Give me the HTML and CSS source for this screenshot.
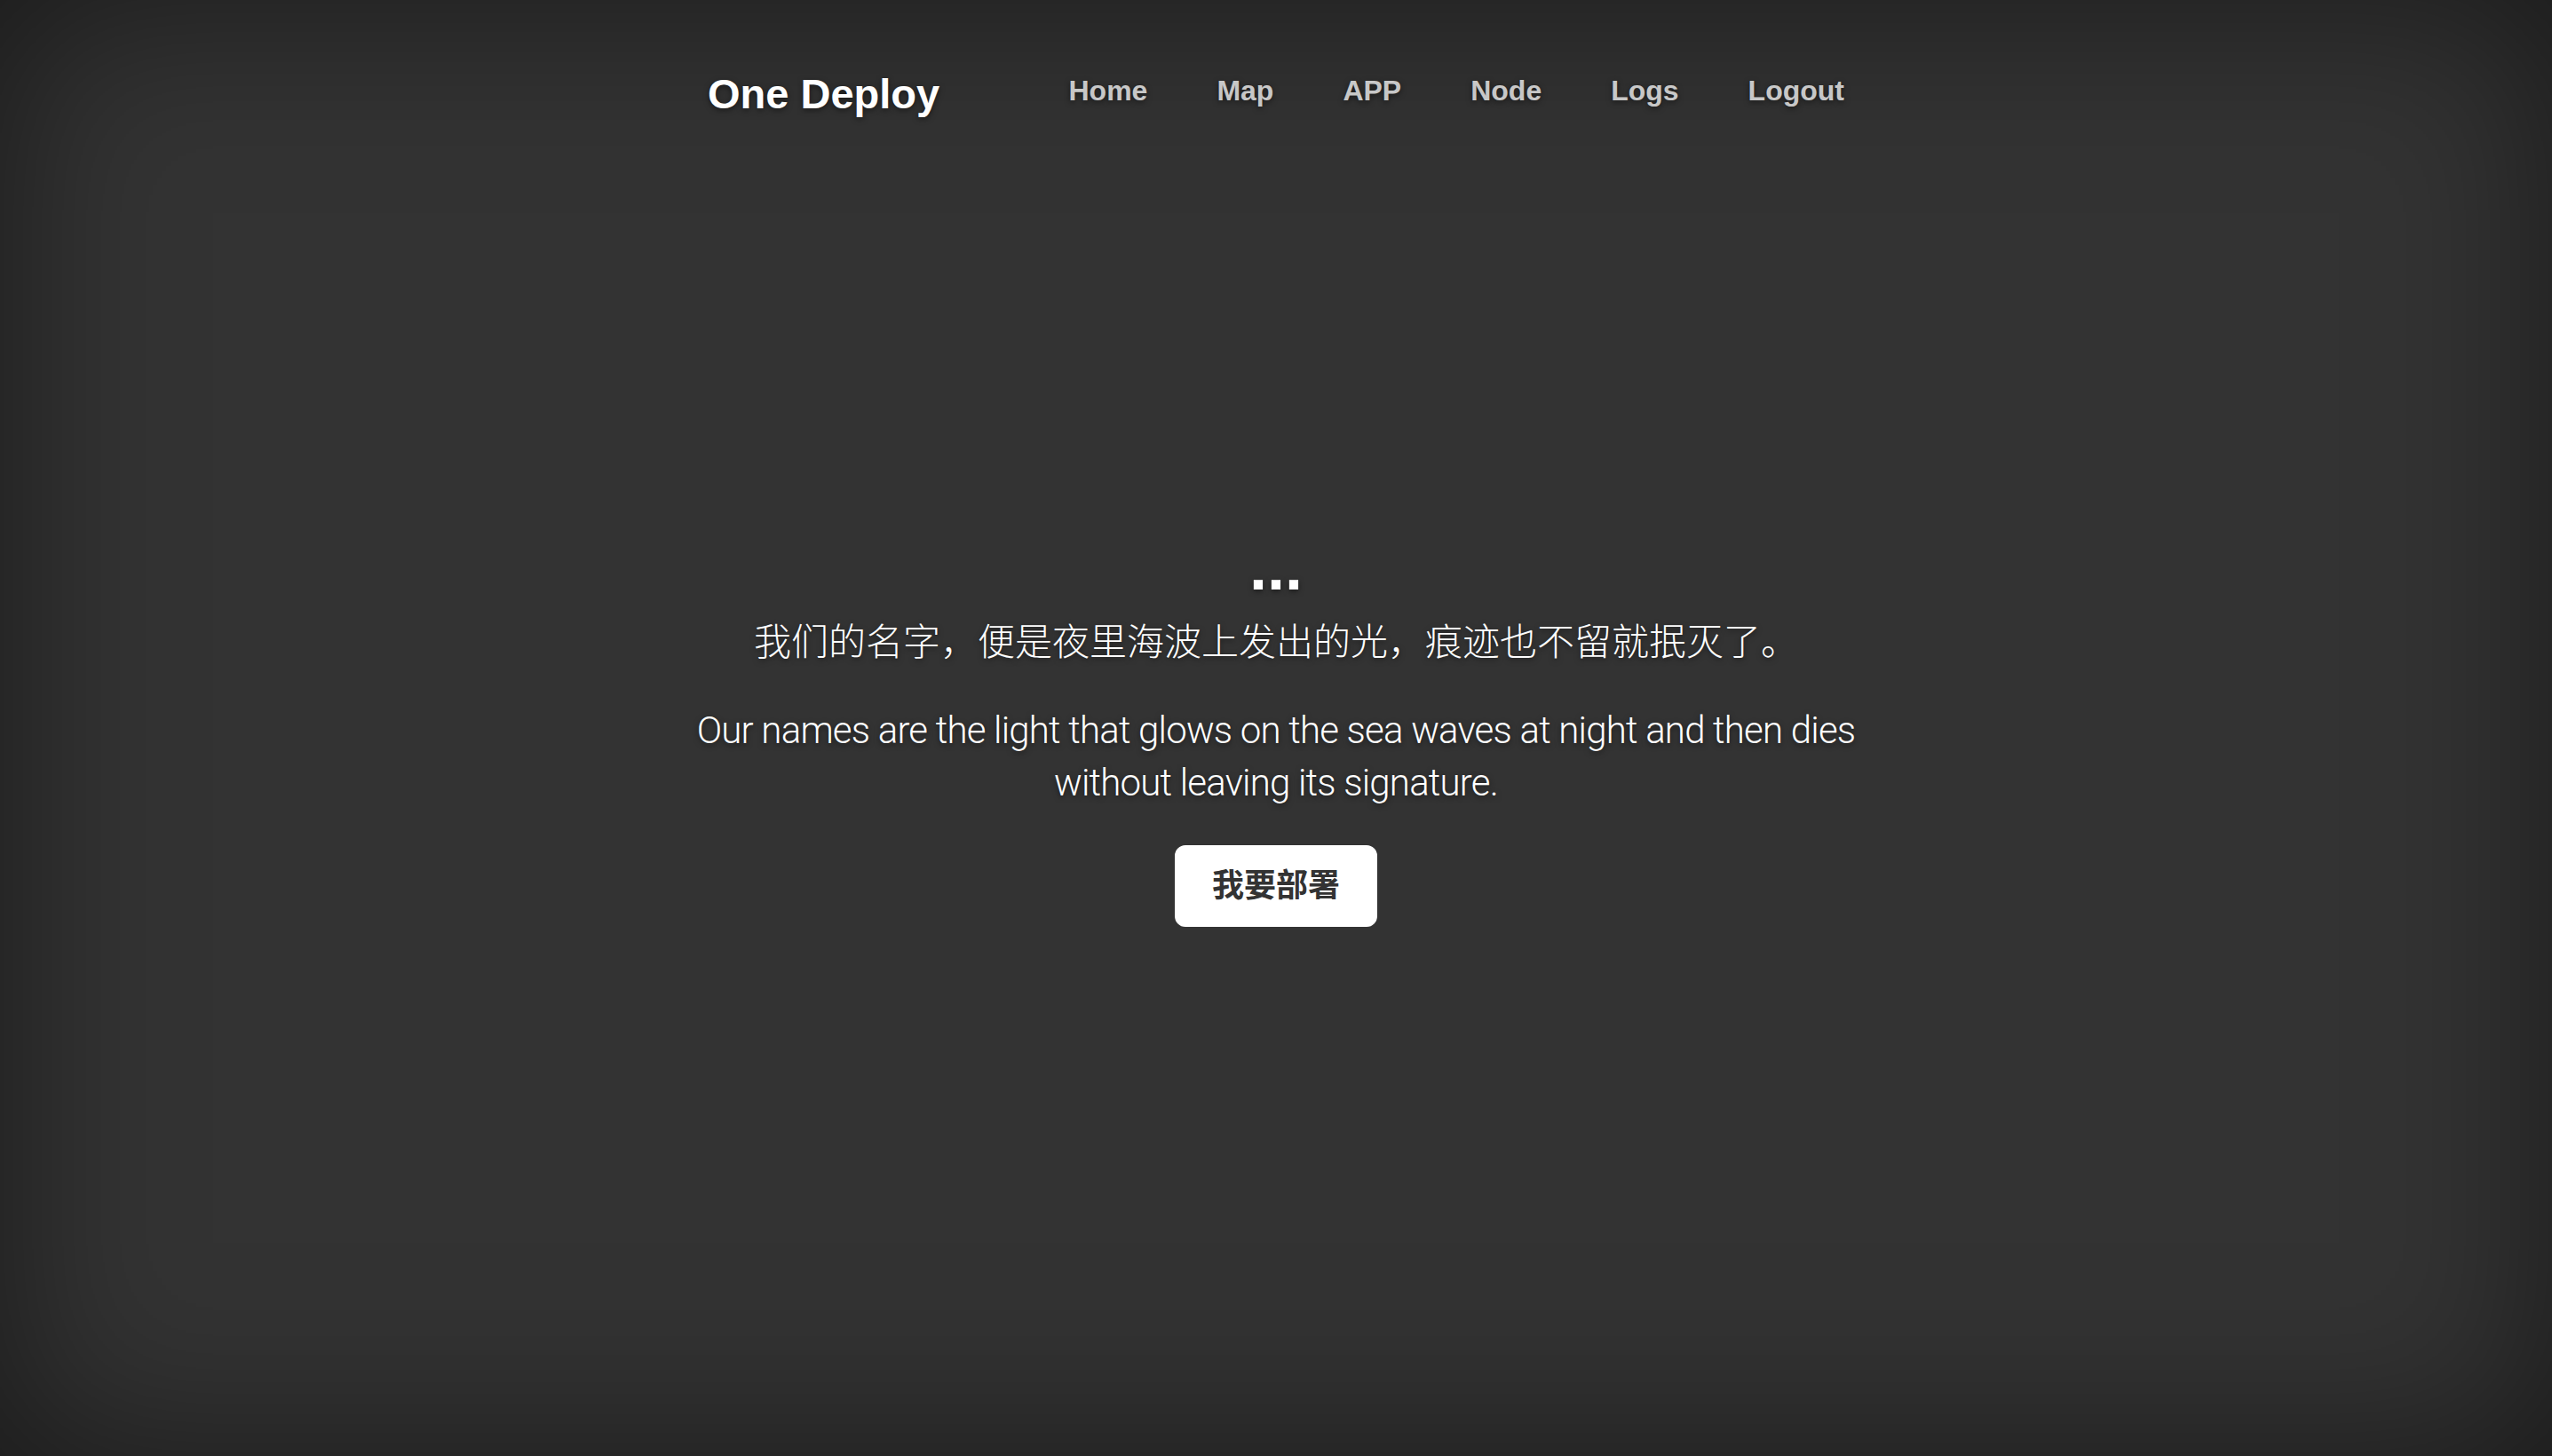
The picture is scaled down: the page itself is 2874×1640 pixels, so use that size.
FILE: index.html
```html
<!DOCTYPE html>
<html lang="zh-CN">
<head>
<meta charset="utf-8">
<title>One Deploy</title>
<link rel="stylesheet" href="styles.css">
</head>
<body>
<div class="site-wrapper">
  <header class="masthead">
    <div class="inner">
      <h3 class="masthead-brand">One Deploy</h3>
      <nav>
        <ul class="masthead-nav">
          <li><a href="#">Home</a></li>
          <li><a href="#">Map</a></li>
          <li><a href="#">APP</a></li>
          <li><a href="#">Node</a></li>
          <li><a href="#">Logs</a></li>
          <li><a href="#">Logout</a></li>
        </ul>
      </nav>
    </div>
  </header>
  <main class="cover">
    <h1 class="cover-heading">...</h1>
    <p class="lead lead-cn">我们的名字，便是夜里海波上发出的光，痕迹也不留就抿灭了。</p>
    <p class="lead lead-en">Our names are the light that glows on the sea waves at night and then dies<br>without leaving its signature.</p>
    <p class="lead lead-action"><a href="#" class="btn-lg">我要部署</a></p>
  </main>
  <footer class="mastfoot"></footer>
</div>
</body>
</html>
```
FILE: styles.css
```css
html, body {
  height: 100%;
  margin: 0;
}
body {
  background: #333;
  color: #fff;
  font-family: "Liberation Sans", Arial, "Noto Sans CJK SC", sans-serif;
  text-shadow: 0 2px 6px rgba(0, 0, 0, 0.5);
}
.site-wrapper {
  min-height: 100%;
  box-sizing: border-box;
  display: grid;
  grid-template-rows: 1fr auto 1fr;
  box-shadow: inset 0 0 200px rgba(0, 0, 0, 0.5);
}
.masthead {
  align-self: start;
  width: 1400px;
  margin: 0 auto;
}
.masthead .inner {
  padding: 60px;
  display: flex;
  justify-content: space-between;
  align-items: flex-start;
}
.masthead-brand {
  margin: 20px 0;
  font-size: 47px;
  line-height: 1.1;
  font-weight: bold;
}
.masthead-nav {
  list-style: none;
  margin: 0;
  padding: 0;
  display: flex;
  gap: 78px;
}
.masthead-nav a {
  display: block;
  padding: 20px 0;
  font-size: 32px;
  line-height: 1.42857;
  font-weight: bold;
  color: rgba(255, 255, 255, 0.75);
  text-decoration: none;
}
.cover {
  width: 1400px;
  margin: 0 auto;
  text-align: center;
}
.cover-heading {
  margin: 0 0 16px;
  padding-top: 4px;
  font-size: 72px;
  line-height: 1.1;
  font-weight: bold;
}
.lead {
  margin: 0 0 40px;
  font-family: Roboto, "Noto Sans CJK SC", sans-serif;
  font-size: 42px;
  line-height: 1.4;
  font-weight: 300;
}
.lead-en {
  letter-spacing: -0.8px;
}
.lead-action {
  margin: 0;
  line-height: 1;
}
.btn-lg {
  display: inline-block;
  padding: 20px 40px;
  font-family: "Liberation Sans", "Noto Sans CJK SC", sans-serif;
  font-size: 36px;
  line-height: 1.3333;
  font-weight: bold;
  color: #333;
  background: #fff;
  border: 2px solid #fff;
  border-radius: 12px;
  text-decoration: none;
  text-shadow: none;
}
.mastfoot {
  min-height: 0;
}
```
